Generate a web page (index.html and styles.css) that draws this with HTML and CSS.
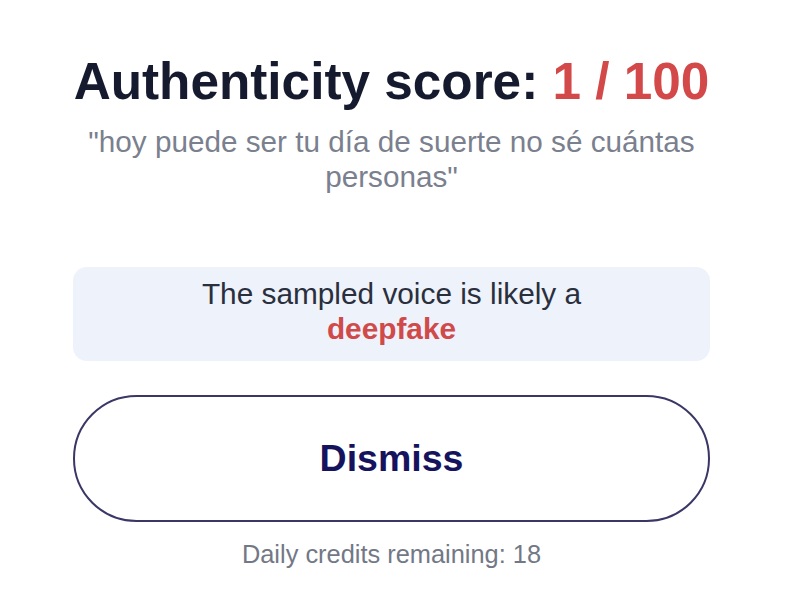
FILE: index.html
```html
<!DOCTYPE html>
<html lang="en">
<head>
    <meta charset="UTF-8">
    <meta name="viewport" content="width=device-width, initial-scale=1.0">
    <title>Authenticity score</title>
    <link rel="stylesheet" href="styles.css">
</head>
<body>
    <div class="page">
        <div class="result">
            <!-- Score header -->
            <h1 class="score-title">Authenticity score: <span class="score-value">1 / 100</span></h1>
            <p class="transcript">"hoy puede ser tu día de suerte no sé cuántas personas"</p>

            <!-- Verdict -->
            <div class="verdict">
                The sampled voice is likely a<br>
                <span class="verdict-label">deepfake</span>
            </div>

            <button type="button" class="dismiss-btn">Dismiss</button>

            <p class="credits">Daily credits remaining: 18</p>
        </div>
    </div>
</body>
</html>
```

FILE: styles.css
```css
body {
    margin: 0;
    padding: 0;
    background: #ffffff;
    font-family: 'Liberation Sans', Arial, sans-serif;
}

.page {
    width: 783px;
}

.result {
    width: 637px;
    margin: 0 auto;
    padding-top: 53px;
    text-align: center;
}

.score-title {
    margin: 0;
    font-size: 51.3px;
    line-height: 1.15;
    font-weight: 700;
    color: #161a2e;
}

.score-value {
    color: #d34848;
}

.transcript {
    margin: 12px 0 0;
    padding: 0 10px;
    font-size: 29.7px;
    line-height: 35px;
    color: #7a808e;
}

.verdict {
    margin-top: 73px;
    padding: 9px 20px 15px;
    background: #eef2fb;
    border-radius: 14px;
    font-size: 29.8px;
    line-height: 35px;
    color: #2a2f3d;
}

.verdict-label {
    font-weight: 700;
    color: #d04a4a;
}

.dismiss-btn {
    display: block;
    width: 100%;
    height: 127px;
    margin-top: 34px;
    background: #ffffff;
    border: 2px solid #3a3766;
    border-radius: 64px;
    font-family: inherit;
    font-size: 37.5px;
    font-weight: 700;
    color: #15125e;
    cursor: pointer;
}

.credits {
    margin: 17px 0 0;
    font-size: 25.4px;
    line-height: 30px;
    color: #737886;
}
```
